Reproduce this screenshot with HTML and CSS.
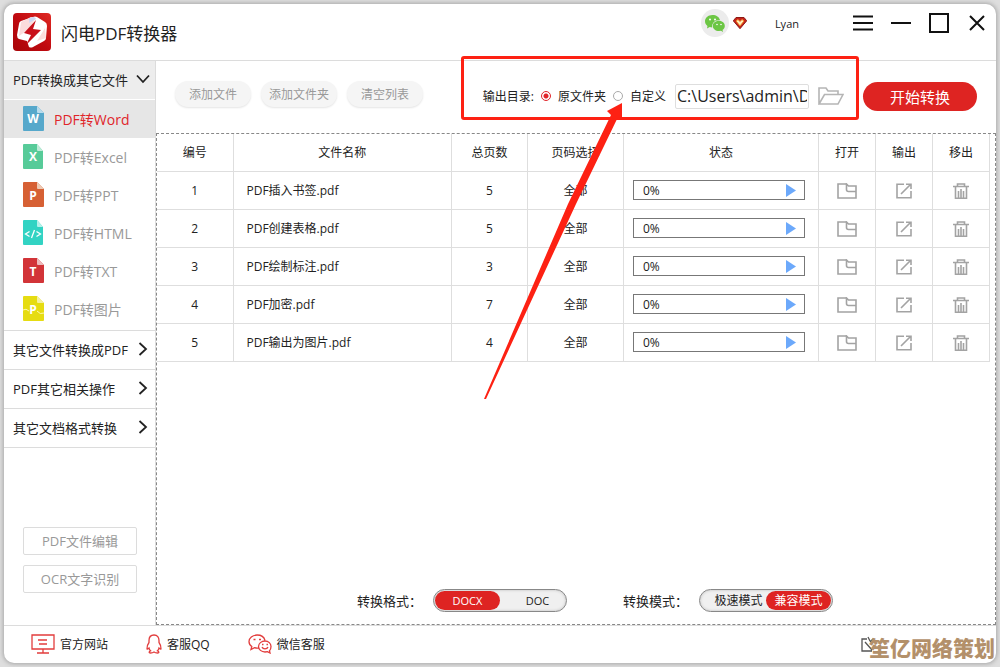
FILE: index.html
```html
<!DOCTYPE html>
<html lang="zh-CN">
<head>
    <meta charset="UTF-8">
    <meta name="viewport" content="width=device-width, initial-scale=1.0">
    <title>闪电PDF转换器</title>
    <link rel="stylesheet" href="styles.css">
</head>
<body>
    <!-- Shared icons -->
    <svg class="sprite" aria-hidden="true">
        <symbol id="open" viewBox="0 0 20 16">
            <path d="M9.500 1H1v14h18V3h-7.500L9.500 1v5.500q0 2 2 2H19" fill="none" stroke="#a3a3a3" stroke-width="1.600"/>
        </symbol>
        <symbol id="export" viewBox="0 0 16 16">
            <path d="M8 1.200H1v13.600h14V8M5 11L14 2M10 1.200h5V6" fill="none" stroke="#a3a3a3" stroke-width="1.600"/>
        </symbol>
        <symbol id="trash" viewBox="0 0 16 16">
            <path d="M0 3.500h16M4.500 3V1h7v2M2.500 3.500v11.700h11V3.500M5.500 8v7M8 6v9M10.500 8v7" fill="none" stroke="#a3a3a3" stroke-width="1.600"/>
        </symbol>
        <symbol id="chevron" viewBox="0 0 10 14">
            <path d="M1.500 1l6.500 6-6.500 6" fill="none" stroke="#222" stroke-width="1.800"/>
        </symbol>
    </svg>

    <div class="window">
        <header class="titlebar">
            <svg class="logo" viewBox="0 0 40 40">
                <defs>
                    <linearGradient id="logoRed" x1="0" y1="1" x2="1" y2="0">
                        <stop offset="0" stop-color="#a80508"/>
                        <stop offset="0.5" stop-color="#c00a10"/>
                        <stop offset="1" stop-color="#e02a24"/>
                    </linearGradient>
                </defs>
                <rect x="1" y="1" width="38" height="38" rx="4" fill="url(#logoRed)"/>
                <path d="M21 5q2-1 4 0l8 5q2 1 2 4l-1 12q0 2-2 3l-11 6q-2 1-4 0l-2-6-8-2q-2-1-2-4l2-11q0-2 2-3z" fill="#fff"/>
                <path d="M9 10l10-5 5 1-8 12-9 6z" fill="#fbdcdc"/>
                <path d="M17 6l5-1 2 2-7 4z" fill="#cfd8f4"/>
                <path d="M33 16l1 10-9 3z" fill="#fbdcdc"/>
                <path d="M24 8L12 21l7 2-5 10 15-15-8-1z" fill="#c8101a"/>
            </svg>
            <h1>闪电PDF转换器</h1>
            <div class="account">
                <span class="avatar">
                    <svg width="20" height="17" viewBox="0 0 20 17">
                        <path d="M7.500 0C3 0 0 3 0 6.200c0 2 1 3.600 2.500 4.800L2 13.500l2.700-1.400 2.500.4C6.500 8 10 5 15 5 14.300 2 11.200 0 7.500 0z" fill="#6cc644"/>
                        <path d="M14 5.800c-3.500 0-6.200 2.300-6.200 5.100s2.700 5.100 6.200 5.100l2-.3 2 1.200-.5-1.900c1.500-1 2.300-2.400 2.300-4.100 0-2.800-2.500-5.100-5.800-5.100z" fill="#6cc644"/>
                        <g fill="#fff"><circle cx="5" cy="4.500" r="1"/><circle cx="10" cy="4.500" r="1"/><circle cx="12" cy="9.500" r=".8"/><circle cx="16" cy="9.500" r=".8"/></g>
                    </svg>
                </span>
                <svg width="14" height="12" viewBox="0 0 14 12">
                    <path d="M3 .5h8l2.700 3.300L7 11.700.3 3.800z" fill="#c5221c" stroke="#8c1a12"/>
                    <path d="M3 4l2-1.500 2 2 2-2L11 4 7 9z" fill="#fff0c0" stroke="#f0851c"/>
                </svg>
                <span class="user">Lyan</span>
            </div>
            <div class="controls">
                <button type="button" aria-label="菜单"><svg viewBox="0 0 20 20"><path d="M0 3.500h20M0 10h20M0 16.500h20"/></svg></button>
                <button type="button" aria-label="最小化"><svg viewBox="0 0 20 20"><path d="M0 10h20"/></svg></button>
                <button type="button" aria-label="最大化"><svg viewBox="0 0 20 20"><path d="M1 1h18v18H1z"/></svg></button>
                <button type="button" aria-label="关闭"><svg viewBox="0 0 20 20"><path d="M3 3l14 14M17 3L3 17"/></svg></button>
            </div>
        </header>

        <div class="body">
            <nav class="sidebar">
                <button type="button" class="group open">PDF转换成其它文件<svg><use href="#chevron"/></svg></button>
                <ul class="formats">
                    <li><a href="#" class="active">
                        <svg viewBox="0 0 21 25"><path d="M1 0h13l7 7v17q0 1-1 1H1q-1 0-1-1V1q0-1 1-1z" fill="#56a8cb"/><path d="M14 0v6q0 1 1 1h6z" fill="#b9dcec"/><text x="10" y="17">W</text></svg>PDF转Word</a></li>
                    <li><a href="#">
                        <svg viewBox="0 0 21 25"><path d="M1 0h13l6 7v17q0 1-1 1H1q-1 0-1-1V1q0-1 1-1z" fill="#57cb99"/><path d="M14 0v6q0 1 1 1h5z" fill="#c0ecd9"/><text x="10" y="17">X</text></svg>PDF转Excel</a></li>
                    <li><a href="#">
                        <svg viewBox="0 0 21 25"><path d="M1 0h13l7 7v17q0 1-1 1H1q-1 0-1-1V1q0-1 1-1z" fill="#d66034"/><path d="M14 0v6q0 1 1 1h6z" fill="#edcbb5"/><text x="10" y="18">P</text></svg>PDF转PPT</a></li>
                    <li><a href="#">
                        <svg viewBox="0 0 21 25"><path d="M1 0h13l6 7v17q0 1-1 1H1q-1 0-1-1V1q0-1 1-1z" fill="#32d3c3"/><path d="M14 0v6q0 1 1 1h5z" fill="#b6f1ea"/><path d="M6.500 11.500L2.500 14l4 2.500M11.500 10l-3 8M13.500 11.500l4 2.500-4 2.500" fill="none" stroke="#fff" stroke-width="1.300"/></svg>PDF转HTML</a></li>
                    <li><a href="#">
                        <svg viewBox="0 0 21 25"><path d="M1 0h13l7 7v17q0 1-1 1H1q-1 0-1-1V1q0-1 1-1z" fill="#d23438"/><path d="M14 0v6q0 1 1 1h6z" fill="#ecbcbc"/><text x="10" y="18">T</text></svg>PDF转TXT</a></li>
                    <li><a href="#">
                        <svg viewBox="0 0 21 25"><path d="M1 0h13l7 7v17q0 1-1 1H1q-1 0-1-1V1q0-1 1-1z" fill="#e6dc12"/><path d="M14 0v6q0 1 1 1h6z" fill="#f4f0a0"/><path d="M0 14q3-2 6 1M14 15q3 4 7 2" fill="none" stroke="#fff8b0"/><text x="10" y="18">P</text></svg>PDF转图片</a></li>
                </ul>
                <button type="button" class="group">其它文件转换成PDF<svg><use href="#chevron"/></svg></button>
                <button type="button" class="group">PDF其它相关操作<svg><use href="#chevron"/></svg></button>
                <button type="button" class="group">其它文档格式转换<svg><use href="#chevron"/></svg></button>
                <div class="tools">
                    <button type="button">PDF文件编辑</button>
                    <button type="button">OCR文字识别</button>
                </div>
            </nav>

            <main>
                <div class="toolbar">
                    <div class="file-buttons">
                        <button type="button">添加文件</button>
                        <button type="button">添加文件夹</button>
                        <button type="button">清空列表</button>
                    </div>
                    <div class="output">
                        <span>输出目录:</span>
                        <input type="radio" name="dir" id="dirSource" checked>
                        <label for="dirSource">原文件夹</label>
                        <input type="radio" name="dir" id="dirCustom">
                        <label for="dirCustom">自定义</label>
                        <input type="text" class="path" aria-label="输出目录" value="C:\Users\admin\Desktop">
                        <button type="button" class="browse" aria-label="浏览">
                            <svg width="26" height="18" viewBox="0 0 26 18"><path d="M1 17V1h7l2 3h10v3.500M1 17L6.500 7.500H25L20 17z" fill="none" stroke="#b5b5b5" stroke-width="1.600"/></svg>
                        </button>
                    </div>
                    <button type="button" class="start">开始转换</button>
                </div>

                <section class="panel">
                    <table>
                        <colgroup>
                            <col class="c-no"><col><col class="c-pages"><col class="c-range"><col class="c-status"><col class="c-act"><col class="c-act"><col class="c-act">
                        </colgroup>
                        <thead>
                            <tr><th>编号</th><th>文件名称</th><th>总页数</th><th>页码选择</th><th>状态</th><th>打开</th><th>输出</th><th>移出</th></tr>
                        </thead>
                        <tbody id="files"></tbody>
                    </table>

                    <div class="options">
                        <fieldset>
                            <legend>转换格式：</legend>
                            <div class="switch format">
                                <input type="radio" name="format" id="docx" checked><label for="docx">DOCX</label>
                                <input type="radio" name="format" id="doc"><label for="doc">DOC</label>
                            </div>
                        </fieldset>
                        <fieldset>
                            <legend>转换模式：</legend>
                            <div class="switch mode">
                                <input type="radio" name="mode" id="fast"><label for="fast">极速模式</label>
                                <input type="radio" name="mode" id="compat" checked><label for="compat">兼容模式</label>
                            </div>
                        </fieldset>
                    </div>
                </section>
            </main>
        </div>

        <footer>
            <a href="#"><svg width="24" height="20" viewBox="0 0 24 20"><path d="M1 1h22v14H1zM7 6h9M8 10h8M12 15v4M6 19h12"/></svg>官方网站</a>
            <a href="#"><svg width="16" height="20" viewBox="0 0 16 20"><path d="M8 1C4.500 1 3 3.500 3 6.500v2C1.500 10.500.8 12.500 1 15c.7.500 1.300-.5 2-1 .2 1.200.7 2 1.500 2.800-1.500.5-2 2.200 0 2.200 1.500 0 2.500-.3 3.500-1 1 .7 2 1 3.500 1 2 0 1.500-1.700 0-2.200.8-.8 1.300-1.600 1.500-2.800.7.500 1.300 1.500 2 1 .2-2.500-.5-4.500-2-6.500v-2C13 3.500 11.500 1 8 1z"/></svg>客服QQ</a>
            <a href="#"><svg width="24" height="20" viewBox="0 0 24 20"><path d="M11 14c-1.500.3-3 .2-4.500-.3L3 15.500l.8-3C2 11.300 1 9.500 1 7.500 1 4 4.500 1 9 1c4 0 7.200 2.300 8 5.500M17 7c-3.500 0-6.500 2.500-6.500 5.500S13.500 18 17 18l2.500-.3 2.500 1.300-.5-2.300c1-1 1.500-2.500 1.500-4.200C23 9.500 20.500 7 17 7zM14 13c1 2.500 5 2.500 6 0M5.500 5.500h2M11 5.500h2M14 10.500h1.500M18.500 10.500H20"/></svg>微信客服</a>
            <svg class="feedback" width="16" height="18" viewBox="0 0 16 18"><path d="M6 4H1v12h10M4 7l7 8M7 2l2 4M12 4L9 7" fill="none" stroke="#555" stroke-width="1.300"/></svg>
            <span class="watermark">笙亿网络策划</span>
        </footer>
    </div>

    <!-- Red marks over the window -->
    <div class="highlight"></div>
    <svg class="arrow" viewBox="0 0 140 300" aria-hidden="true">
        <path d="M0 298L84 103L127 14L123 10L138 2V17L134 16L92 103L2 298z" fill="#fd2113"/>
    </svg>

    <script src="script.js"></script>
</body>
</html>
```
FILE: styles.css
```css
* {
    margin: 0;
    padding: 0;
    box-sizing: border-box;
}

body {
    background-color: #dedede;
    color: #222;
    font-family: "Open Sans", "Noto Sans CJK SC", sans-serif;
    font-size: 12px;
    min-height: 100vh;
    padding: 4px;
    display: flex;
}

button, input {
    font: inherit;
    color: inherit;
    background: none;
    border: 0;
}

button {
    cursor: pointer;
}

a {
    color: inherit;
    text-decoration: none;
}

.sprite {
    position: absolute;
    width: 0;
    height: 0;
}

.window {
    flex: 1;
    display: flex;
    flex-direction: column;
    background-color: #fff;
    border-radius: 10px;
    box-shadow: 0 0 4px 1px #a8a8a8;
}

/* Title bar */
.titlebar {
    height: 57px;
    display: flex;
    align-items: center;
    padding: 0 9px 0 8px;
    border-bottom: 1px solid #dcdcdc;
}

.logo {
    width: 40px;
    height: 40px;
    margin-right: 9px;
}

h1 {
    font-size: 17px;
    font-weight: 400;
    flex: 1;
}

.account {
    display: flex;
    align-items: center;
    gap: 4px;
    padding-bottom: 18px;
}

.avatar {
    width: 28px;
    height: 28px;
    border-radius: 50%;
    background-color: #ececec;
    display: flex;
    align-items: center;
    justify-content: center;
}

.user {
    margin-left: 24px;
    font-size: 11px;
}

.controls {
    display: flex;
    gap: 18px;
    margin-left: 54px;
    padding-bottom: 18px;
}

.controls button,
.controls svg {
    display: block;
    width: 20px;
    height: 20px;
}

.controls path {
    fill: none;
    stroke: #111;
    stroke-width: 2;
}

.body {
    flex: 1;
    display: flex;
}

/* Sidebar */
.sidebar {
    width: 152px;
    display: flex;
    flex-direction: column;
    border-right: 1px solid #dcdcdc;
    font-size: 13px;
}

.group {
    height: 39px;
    display: flex;
    align-items: center;
    justify-content: space-between;
    padding: 0 7px 2px 9px;
    border-bottom: 1px solid #dcdcdc;
    white-space: nowrap;
}

.group svg {
    width: 10px;
    height: 14px;
}

.group.open {
    background-color: #ededed;
    border-color: #fff;
}

.group.open svg {
    transform: rotate(90deg);
}

.formats {
    list-style: none;
    padding-bottom: 2px;
    border-bottom: 1px solid #dcdcdc;
    font-size: 14px;
}

.formats a {
    height: 38px;
    display: flex;
    align-items: center;
    gap: 10px;
    padding-left: 19px;
    padding-bottom: 1px;
    color: #999;
}

.formats a.active {
    background-color: #e6e6e6;
    color: #e0252a;
}

.formats svg {
    width: 21px;
    height: 25px;
}

.formats text {
    fill: #fff;
    font-size: 12px;
    font-weight: 700;
    text-anchor: middle;
}

.tools {
    margin-top: auto;
    padding: 0 18px 32px 19px;
    display: flex;
    flex-direction: column;
    gap: 10px;
}

.tools button {
    height: 28px;
    padding-bottom: 2px;
    border: 1px solid #dcdcdc;
    border-radius: 2px;
    color: #999;
}

/* Toolbar */
main {
    flex: 1;
    min-width: 0;
    display: flex;
    flex-direction: column;
}

.toolbar {
    height: 72px;
    display: flex;
    align-items: center;
    justify-content: space-between;
    padding: 0 19px 2px 19px;
}

.file-buttons {
    display: flex;
    gap: 10px;
    padding-bottom: 4px;
}

.file-buttons button {
    width: 76px;
    height: 26px;
    border-radius: 13px;
    background-color: #f5f5f5;
    box-shadow: 0 1px 2px #e4e4e4;
    color: #999;
}

.output {
    display: flex;
    align-items: center;
    margin-left: auto;
    margin-right: 19px;
}

.output input[type="radio"] {
    appearance: none;
    width: 10px;
    height: 10px;
    border: 1px solid #aaa;
    border-radius: 50%;
    margin: 0 7px;
}

.output input[type="radio"]:checked {
    border-color: #e0252a;
    background: radial-gradient(circle, #e0252a 2px, #fff 3px);
}

.output .path {
    width: 134px;
    height: 25px;
    margin: 0 9px;
    padding: 0 1px;
    border: 1px solid #dedede;
    border-radius: 2px;
    font-size: 16px;
}

.browse svg {
    display: block;
}

.start {
    width: 114px;
    height: 29px;
    border-radius: 15px;
    background-color: #de2422;
    color: #fff;
    font-size: 15px;
}

/* File list */
.panel {
    flex: 1;
    display: flex;
    flex-direction: column;
    justify-content: space-between;
    border: 1px dashed #888;
    padding-right: 5px;
}

table {
    width: 100%;
    table-layout: fixed;
    border-collapse: collapse;
}

.c-no, .c-pages {
    width: 76px;
}

.c-range {
    width: 96px;
}

.c-status {
    width: 195px;
}

.c-act {
    width: 57px;
}

th, td {
    height: 38px;
    border-right: 1px solid #dedede;
    border-bottom: 1px solid #dedede;
    font-weight: 400;
    text-align: center;
}

th {
    height: 37px;
}

.name {
    text-align: left;
    padding-left: 13px;
}

td button {
    vertical-align: middle;
}

td svg {
    display: block;
    height: 16px;
}

.progress {
    height: 20px;
    margin: 0 13px 0 9px;
    padding: 0 8px 0 9px;
    border: 1px solid #777;
    display: flex;
    align-items: center;
    justify-content: space-between;
}

.progress svg {
    width: 10px;
    height: 13px;
}

/* Format and mode switches */
.options {
    display: flex;
    justify-content: center;
    gap: 56px;
    padding: 0 0 12px 43px;
}

fieldset {
    border: 0;
    display: flex;
    align-items: center;
}

legend {
    float: left;
    width: 76px;
    font-size: 13px;
}

.switch {
    width: 134px;
    height: 23px;
    display: flex;
    padding: 1px;
    border: 1px solid #888;
    border-radius: 12px;
    background-color: #f0f0f0;
    box-shadow: inset 0 0 3px #bbb;
}

.switch input {
    position: absolute;
    opacity: 0;
}

.switch label {
    width: 50%;
    border-radius: 10px;
    line-height: 19px;
    text-align: center;
}

.switch.format label {
    font-size: 11px;
}

.switch input:not(:checked) + label {
    padding-left: 10px;
}

.switch input:checked + label {
    background-color: #de2422;
    color: #fff;
}

/* Footer */
footer {
    height: 38px;
    display: flex;
    align-items: center;
    gap: 38px;
    padding-left: 27px;
    padding-bottom: 2px;
    border-top: 1px solid #dcdcdc;
}

footer a {
    display: flex;
    align-items: center;
    gap: 5px;
}

footer a path {
    fill: none;
    stroke: #e23d3d;
    stroke-width: 1.3;
}

.feedback {
    margin-left: auto;
}

.watermark {
    margin-left: -46px;
    margin-right: 1px;
    padding-top: 8px;
    font-size: 21px;
    font-weight: 900;
    line-height: 24px;
    color: #b3906a;
}

/* Red marks over the window */
.highlight {
    position: absolute;
    top: 56px;
    right: 141px;
    width: 398px;
    height: 64px;
    border: 3px solid #fd2113;
    border-radius: 3px;
    pointer-events: none;
}

.arrow {
    position: absolute;
    top: 101px;
    right: 376px;
    width: 140px;
    height: 300px;
    pointer-events: none;
}
```
FILE: script.js
```js
const files = [
    { name: 'PDF插入书签.pdf', pages: 5 },
    { name: 'PDF创建表格.pdf', pages: 5 },
    { name: 'PDF绘制标注.pdf', pages: 3 },
    { name: 'PDF加密.pdf', pages: 7 },
    { name: 'PDF输出为图片.pdf', pages: 4 }
];

document.getElementById('files').innerHTML = files.map((file, i) => `
    <tr>
        <td>${i + 1}</td>
        <td class="name">${file.name}</td>
        <td>${file.pages}</td>
        <td>全部</td>
        <td>
            <div class="progress">
                <span>0%</span>
                <button type="button" aria-label="开始"><svg viewBox="0 0 10 13"><path d="M0 0l10 6.500L0 13z" fill="#6ca9fb"/></svg></button>
            </div>
        </td>
        <td><button type="button" aria-label="打开"><svg width="20"><use href="#open"/></svg></button></td>
        <td><button type="button" aria-label="输出"><svg width="16"><use href="#export"/></svg></button></td>
        <td><button type="button" aria-label="移出"><svg width="16"><use href="#trash"/></svg></button></td>
    </tr>
`).join('');
```
